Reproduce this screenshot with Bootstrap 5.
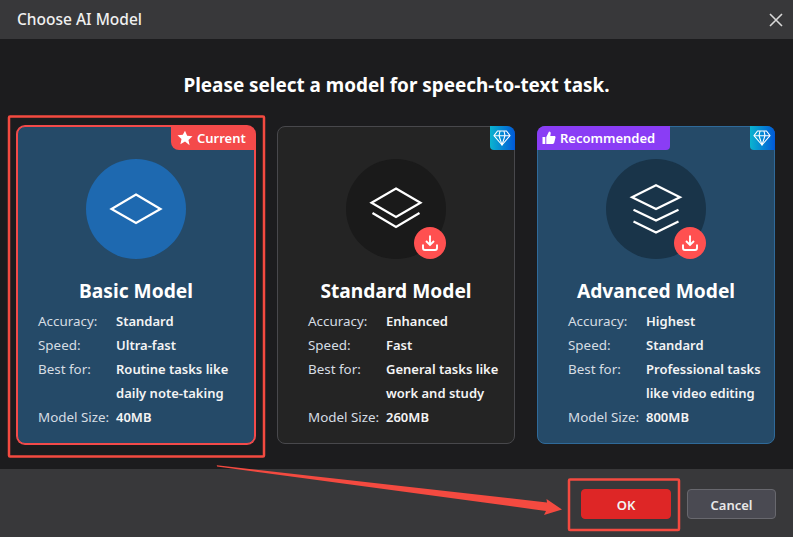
<!doctype html>
<html lang="en">
<head>
<meta charset="utf-8">
<title>Choose AI Model</title>
<link href="https://cdn.jsdelivr.net/npm/bootstrap@5.3.0/dist/css/bootstrap.min.css" rel="stylesheet">
<style>
html,body{height:537px;overflow:hidden}
body{background:#1c1c1e;color:#fff;font-family:"Noto Sans","Open Sans",sans-serif;position:relative;font-size:13px}
.dlg-head{height:39px;background:#38383a;padding:1px 10px 0 17px}
.dlg-title{font-size:15.500px;font-weight:500;color:#f0f0f0}
.dlg-main{height:430px;padding:0 17px}
.dlg-heading{font-size:18.900px;font-weight:700;text-align:center;margin:0;height:87px;line-height:24px;padding-top:34px}
.model-row{gap:22px}
.model{width:238px;height:318px;background:#242424;border:1px solid #48484c;border-radius:8px;position:relative;padding:32px 0 0;color:#fff}
.model.tint{background:#254a68;border-color:#2f6a9a}
.model.picked{border-color:#f44a4a;box-shadow:0 0 0 1px #f44a4a}
.halo{width:100px;height:100px;border-radius:50%;background:#1a1a1a;position:relative;margin:0 auto}
.tint .halo{background:#193449}
.picked .halo{background:#1e69b0}
.get{position:absolute;right:0;bottom:0;width:32px;height:32px;border-radius:50%;background:#ff5050;display:flex;align-items:center;justify-content:center}
.model-name{font-size:19.200px;font-weight:700;text-align:center;margin:19px 0 5px;line-height:26px}
.facts{padding-left:30px;line-height:24px;font-size:13px}
.picked .facts{padding-left:20px}
.fact{display:flex}
.fact-k{width:78px;flex:none;color:#d6dde3;font-size:13.400px}
.fact-v{font-weight:600;color:#f4f4f4}
.tag{position:absolute;top:-1px;height:24px;display:flex;align-items:center;font-size:13px;font-weight:600;line-height:1;color:#fff}
.tag-now{right:-1px;width:84px;background:#f44a4a;border-radius:0 8px 0 8px;padding-left:6px;gap:4px}
.tag-rec{left:-1px;width:133px;background:#8a3df5;border-radius:8px 0 4px 0;padding-left:5px;gap:4px}
.tag-gem{right:-1px;width:25px;background:linear-gradient(90deg,#0bb4cf,#0058d8);border-radius:0 8px 0 4px;justify-content:center;padding-right:2px}
.dlg-foot{height:68px;background:#38383a;padding:20px 17px 0 0;gap:16px}
.act{width:90px;height:30px;padding:0;font-size:13px;font-weight:600;border-radius:4px;line-height:30px}
.act-ok{background:#de2626;border:1px solid #de2626;color:#f2f2f2}
.act-no{width:89px;background:#4a4a52;border:1px solid #68686e;color:#e8e8e8}
.marks{position:absolute;left:0;top:0;pointer-events:none}
</style>
</head>
<body>
<header class="dlg-head d-flex align-items-center justify-content-between">
  <span class="dlg-title">Choose AI Model</span>
  <svg width="14" height="14" viewBox="0 0 14 14" aria-label="Close"><path d="M1 1l12 12M13 1L1 13" stroke="#d8d8d8" stroke-width="1.600" fill="none"/></svg>
</header>
<main class="dlg-main">
  <h1 class="dlg-heading">Please select a model for speech-to-text task.</h1>
  <div class="model-row d-flex">
    <article class="model tint picked">
      <span class="tag tag-now"><svg width="16" height="16" viewBox="0 0 16 16"><path d="M8 .8l2.200 4.900 5.300.6-4 3.600 1.100 5.300L8 11.500l-4.600 2.700 1.100-5.300-4-3.600 5.300-.6z" fill="#fff"/></svg>Current</span>
      <div class="halo">
        <svg class="position-absolute top-0 start-0" width="100" height="100" viewBox="0 0 100 100" fill="none" stroke="#fff" stroke-width="2.200"><path d="M50 35.500L74.500 50 50 64 25.500 50z"/></svg>
      </div>
      <h2 class="model-name">Basic Model</h2>
      <div class="facts">
        <div class="fact"><span class="fact-k">Accuracy:</span><span class="fact-v">Standard</span></div>
        <div class="fact"><span class="fact-k">Speed:</span><span class="fact-v">Ultra-fast</span></div>
        <div class="fact"><span class="fact-k">Best for:</span><span class="fact-v">Routine tasks like<br>daily note-taking</span></div>
        <div class="fact"><span class="fact-k">Model Size:</span><span class="fact-v">40MB</span></div>
      </div>
    </article>
    <article class="model">
      <span class="tag tag-gem"><svg width="18" height="16" viewBox="0 0 18 16" fill="none" stroke="#fff" stroke-width="1.100" stroke-linejoin="round"><path d="M4.500 1h9l3.500 4.700L9 15 1 5.700z"/><path d="M1 5.700h16M6 5.700L9 15l3-9.300M6 5.700L7 1m5 4.700L11 1"/></svg></span>
      <div class="halo">
        <svg class="position-absolute top-0 start-0" width="100" height="100" viewBox="0 0 100 100" fill="none" stroke="#fff" stroke-width="2.200"><path d="M50 29.500L74.500 43.700 50 58 25.500 43.700z"/><path d="M26.500 54L50 68 73.500 54"/></svg>
        <span class="get"><svg width="18" height="18" viewBox="0 0 18 18" fill="none" stroke="#fff" stroke-width="1.900"><path d="M9 1.500v9M5 7l4 4 4-4"/><path d="M2 10.500v3.500a2 2 0 0 0 2 2h10a2 2 0 0 0 2-2v-3.500"/></svg></span>
      </div>
      <h2 class="model-name">Standard Model</h2>
      <div class="facts">
        <div class="fact"><span class="fact-k">Accuracy:</span><span class="fact-v">Enhanced</span></div>
        <div class="fact"><span class="fact-k">Speed:</span><span class="fact-v">Fast</span></div>
        <div class="fact"><span class="fact-k">Best for:</span><span class="fact-v">General tasks like<br>work and study</span></div>
        <div class="fact"><span class="fact-k">Model Size:</span><span class="fact-v">260MB</span></div>
      </div>
    </article>
    <article class="model tint">
      <span class="tag tag-rec"><svg width="14" height="14" viewBox="0 0 14 14" fill="#fff"><path d="M.5 6h2.800v7H.5zM4.300 6l2.700-5.500c1.200 0 1.900.8 1.700 2L8.300 5h4c.9 0 1.400.7 1.200 1.500l-1.300 5.300c-.2.7-.7 1.200-1.500 1.200H4.300z"/></svg>Recommended</span>
      <span class="tag tag-gem"><svg width="18" height="16" viewBox="0 0 18 16" fill="none" stroke="#fff" stroke-width="1.100" stroke-linejoin="round"><path d="M4.500 1h9l3.500 4.700L9 15 1 5.700z"/><path d="M1 5.700h16M6 5.700L9 15l3-9.300M6 5.700L7 1m5 4.700L11 1"/></svg></span>
      <div class="halo">
        <svg class="position-absolute top-0 start-0" width="100" height="100" viewBox="0 0 100 100" fill="none" stroke="#fff" stroke-width="2.200"><path d="M50 26.300L74 38.200 50 50 26 38.200z"/><path d="M27.500 50.800L50 61.500 72.500 50.800M27.500 62.500L50 73.500 72.500 62.500"/></svg>
        <span class="get"><svg width="18" height="18" viewBox="0 0 18 18" fill="none" stroke="#fff" stroke-width="1.900"><path d="M9 1.500v9M5 7l4 4 4-4"/><path d="M2 10.500v3.500a2 2 0 0 0 2 2h10a2 2 0 0 0 2-2v-3.500"/></svg></span>
      </div>
      <h2 class="model-name">Advanced Model</h2>
      <div class="facts">
        <div class="fact"><span class="fact-k">Accuracy:</span><span class="fact-v">Highest</span></div>
        <div class="fact"><span class="fact-k">Speed:</span><span class="fact-v">Standard</span></div>
        <div class="fact"><span class="fact-k">Best for:</span><span class="fact-v">Professional tasks<br>like video editing</span></div>
        <div class="fact"><span class="fact-k">Model Size:</span><span class="fact-v">800MB</span></div>
      </div>
    </article>
  </div>
</main>
<footer class="dlg-foot d-flex justify-content-end align-items-start">
  <button type="button" class="btn act act-ok">OK</button>
  <button type="button" class="btn act act-no">Cancel</button>
</footer>
<svg class="marks" width="793" height="537" viewBox="0 0 793 537" fill="none">
  <rect x="9" y="116.500" width="255" height="340" rx="1" stroke="#f44a40" stroke-width="2.500"/>
  <rect x="569" y="479.500" width="110" height="50.500" rx="1" stroke="#f44a40" stroke-width="2.500"/>
  <path d="M216.800 465.200L217 466.400 546 511 544 515 562 509.500 546.500 499 547 502.500z" fill="#f44a40"/>
</svg>
</body>
</html>
